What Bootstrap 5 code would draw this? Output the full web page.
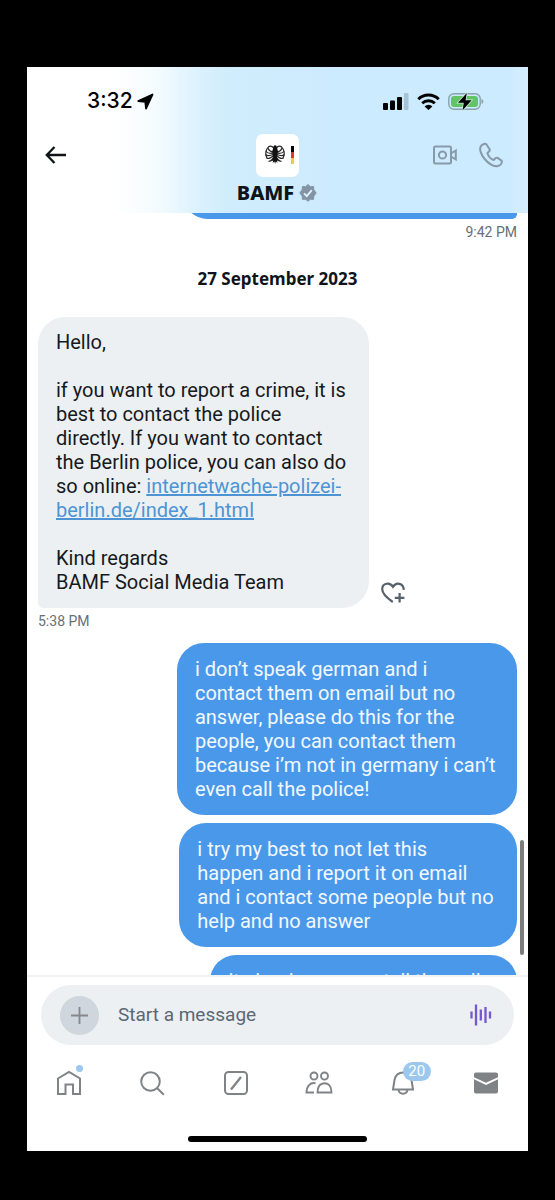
<!DOCTYPE html>
<html lang="en">
<head>
<meta charset="utf-8">
<meta name="viewport" content="width=device-width, initial-scale=1">
<title>BAMF – Messages</title>
<link href="https://cdn.jsdelivr.net/npm/bootstrap@5.3.0/dist/css/bootstrap.min.css" rel="stylesheet">
<style>
  body { background: #000; font-family: Roboto, "Liberation Sans", sans-serif; color: #16191d; font-size: 20px; line-height: 24px; }
  .screen { margin: 67px 27px 49px; height: calc(100vh - 116px); background: #fff; }
  .top-area { height: 146px; background: linear-gradient(90deg, #fff 17%, #f4fbff 26%, #dcf2fc 34%, #cfedfb 40%, #cdebfe 60%, #cdebfe 96%, #d5eefe 100%); }
  .status { height: 34px; margin-top: 17px; padding: 0 44px 0 60px; }
  .clock { font-family: Inter, sans-serif; font-weight: 500; font-size: 21px; color: #000; }
  .chat-head { display: grid; grid-template-columns: 1fr auto 1fr; padding: 0 17px; }
  .head-tools { height: 42px; }
  .calls { gap: 22px; padding-right: 8px; }
  .plain { border: 0; background: none; padding: 0; line-height: 0; color: inherit; }
  .avatar { width: 43px; height: 43px; border-radius: 7px; }
  .peer { font-family: "Noto Sans", sans-serif; font-weight: 800; font-size: 20px; color: #0f1419; }
  .steel { color: #8899a8; }
  .thread { padding: 0 11px; }
  .bubble { border-radius: 27px; padding: 14px 18px; }
  .mine { background: #4a98ea; color: #f2f9ff; align-self: flex-end; width: 71%; }
  .theirs { background: #ecf0f2; border-bottom-left-radius: 5px; width: 69%; padding: 13px 18px 14px; }
  .earlier { height: 52px; width: 70%; margin-top: -46px; border-bottom-right-radius: 5px; }
  .reply { margin-top: 13px; }
  .follow-up { width: 70.5%; }
  .latest { width: 64%; }
  .theirs a { color: #4d94d5; }
  .stamp { font-size: 14px; line-height: 18px; color: #66707a; }
  .day { font-family: "Noto Sans", sans-serif; font-weight: 700; font-size: 17px; line-height: 20px; margin: 28px 0; color: #0f1419; }
  .thumb { right: 4px; bottom: 20px; width: 4px; height: 115px; background: #7d7d7d; }
  .composer { border-top: 2px solid #f0f2f3; padding: 8px 14px 0; }
  .pill { height: 60px; background: #ecf0f2; padding: 0 21px 0 19px; }
  .add { width: 39px; height: 39px; background: #cfd6dd; }
  .pill input { border: 0; background: none; outline: 0; min-width: 0; font-size: 19px; color: #536471; padding: 0; margin-left: 19px; }
  .pill input::placeholder { color: #5b6772; opacity: 1; }
  .tabs { height: 76px; color: #808386; }
  .tabs a { color: inherit; line-height: 0; }
  .dot { width: 7px; height: 7px; background: #9cc8ee; top: -5px; right: -1px; }
  .count { left: 13px; top: -8px; height: 19px; width: 28px; background: #9cc8ee; color: #fff; font-size: 15px; line-height: 19px; }
  .home-bar { width: 179px; height: 6px; background: #000; margin: 15px auto 9px; }
</style>
</head>
<body>
<main class="screen d-flex flex-column overflow-hidden">
  <header class="top-area flex-shrink-0 overflow-hidden">
    <div class="status d-flex align-items-center justify-content-between">
      <div class="d-flex align-items-center gap-1">
        <span class="clock">3:32</span>
        <svg width="17" height="17" viewBox="0 0 17 17"><path d="M15.500 1.500 9 15.500 8.300 8.800 1.300 8Z" stroke="#000" stroke-width="1.800" stroke-linejoin="round"/></svg>
      </div>
      <div class="d-flex align-items-center gap-2">
        <svg width="26" height="17" viewBox="0 0 26 17"><rect y="10" width="5" height="7" rx="1"/><rect x="7" y="7.500" width="5" height="9.500" rx="1"/><rect x="14" y="4" width="5" height="13" rx="1"/><rect x="21" y="0" width="4.500" height="17" rx="1" fill="#a8c2d3"/></svg>
        <svg width="23" height="17" viewBox="0 0 23 17" fill="none" stroke="#000" stroke-width="3"><path d="M1.300 6.200a14.500 14.500 0 0 1 20.400 0M5.200 10.200a9 9 0 0 1 12.600 0"/><path d="M7.600 13.400a5.500 5.500 0 0 1 7.800 0L11.500 17Z" fill="#000" stroke="none"/></svg>
        <svg width="36" height="19" viewBox="0 0 36 19"><rect x=".8" y="1.800" width="31.400" height="15.400" rx="5" fill="none" stroke="#8ba3a8" stroke-width="1.400"/><rect x="3" y="4" width="27" height="11" rx="3" fill="#63c466"/><path d="M33.500 7v5c2.500-.8 2.500-4.200 0-5Z" fill="#8ba3a8"/><path d="M18.800 1 10 10.800h5.800L14.600 18.200l9-10h-6Z" fill="#000" stroke="#cdebe0" stroke-width="1.500" paint-order="stroke"/></svg>
      </div>
    </div>
    <div class="chat-head mt-3">
      <div class="head-tools d-flex align-items-center">
        <button class="plain" aria-label="Back"><svg width="24" height="20" viewBox="0 0 24 20" fill="none" stroke="#0f1419" stroke-width="2.300"><path d="M22 10H3M10.500 2 2.800 10l7.700 8"/></svg></button>
      </div>
      <div class="text-center">
        <svg class="avatar bg-white d-block mx-auto" viewBox="0 0 43 43" aria-label="BAMF">
          <g fill="none" stroke="#2a2a2a" stroke-width="1.200"><path d="M17.500 14c-1.500-2.500-4.500-2.500-6 0-2 3-2 7-.5 10M20.500 14c1.500-2.500 4.500-2.500 6 0 2 3 2 7 .5 10"/><path d="M18 18c-3 0-5-1-6-4M18 19c-4 1-7 0-8.300-2M18 20c-4 2-7 2-8.500.5M18 21c-3 3-6 4-7.500 3M18 22c-1 3-3 5-5.500 5.500M20 18c3 0 5-1 6-4M20 19c4 1 7 0 8.300-2M20 20c4 2 7 2 8.500.5M20 21c3 3 6 4 7.500 3M20 22c1 3 3 5 5.500 5.500"/></g>
          <path d="M17.300 13.500c0-3 3.400-3 3.700 0l1 4-1.200 6 2.700 4-2.500-1 .5 2.500-1.700-1.500-.7 2.500-.7-2.500-1.700 1.500.5-2.500-2.500 1 2.700-4-1.200-6Z" fill="#111"/>
          <path d="M35 12h3v6h-3z"/><path d="M35 18h3v6h-3z" fill="#d8382c"/><path d="M35 24h3v6h-3z" fill="#f3c94b"/>
        </svg>
        <div class="d-flex align-items-center gap-1 mt-1"><span class="peer">BAMF</span>
          <svg width="20" height="20" viewBox="0 0 20 20"><path d="m10 1.500 2.300 2.200 3.200-.2.300 3.200 2.400 3.300-2.400 3.100-.3 3.300-3.200-.2L10 18.300l-2.300-2.100-3.200.2-.3-3.300L1.800 10l2.400-3.300.3-3.200 3.200.2Z" fill="#8294a5" stroke="#8294a5" stroke-linejoin="round"/><path d="m6 10.300 2.800 2.800 5-6" fill="none" stroke="#e2f3ff" stroke-width="1.800"/></svg>
        </div>
      </div>
      <div class="head-tools calls d-flex align-items-center justify-content-end steel">
        <button class="plain" aria-label="Video call"><svg width="24" height="20" viewBox="0 0 24 20" fill="none" stroke="currentColor" stroke-width="2"><rect x="1" y="1.500" width="17" height="17" rx="1.500"/><circle cx="9.500" cy="10" r="3.600"/><path d="m18 8.500 4.800-3v9l-4.800-3"/></svg></button>
        <button class="plain" aria-label="Call"><svg width="24" height="26" viewBox="0 0 24 26" fill="none" stroke="currentColor" stroke-width="2" stroke-linejoin="round"><path d="M6.300 1.800c-1-.4-3.800 1.200-4.700 3C.5 7 1.500 12 5.700 17c4.400 5.200 9.800 7.700 13.200 7 2.300-.5 3.900-2.800 4-4.200 0-.6-.2-1-.7-1.400l-3.600-2.500c-.7-.4-1.300-.3-1.900.2l-2.100 1.900c-3-1.200-5.300-4-6.200-6.800l2-2.200c.4-.5.5-1.100.2-1.800L7.700 2.800c-.3-.6-.7-.9-1.400-1Z"/></svg></button>
      </div>
    </div>
  </header>

  <section class="position-relative overflow-hidden flex-grow-1" style="min-height:0">
    <div class="thread d-flex flex-column">
      <div class="bubble mine earlier flex-shrink-0"></div>
      <div class="stamp text-end mt-1">9:42 PM</div>
      <h1 class="day text-center">27 September 2023</h1>
      <div class="d-flex align-items-end">
        <div class="bubble theirs">Hello,<br><br>if you want to report a crime, it is<br>best to contact the police<br>directly. If you want to contact<br>the Berlin police, you can also do<br>so online: <a href="#">internetwache-polizei-<br>berlin.de/index_1.html</a><br><br>Kind regards<br>BAMF Social Media Team</div>
        <button class="plain ms-2 p-1" aria-label="Add reaction"><svg width="25" height="22" viewBox="0 0 25 22" fill="none" stroke="#56616b" stroke-width="2.200"><path d="M11.800 20C4.500 15 1 10.800 1.200 6.800 1.500 1.200 8.800-.3 12 4.800c3.200-5 10.300-3.800 10.800 3"/><path d="M18.600 11v9.600M13.800 15.800h9.600"/></svg></button>
      </div>
      <div class="stamp mt-1">5:38 PM</div>
      <div class="bubble mine reply mb-2">i don’t speak german and i<br>contact them on email but no<br>answer, please do this for the<br>people, you can contact them<br>because i’m not in germany i can’t<br>even call the police!</div>
      <div class="bubble mine follow-up mb-2">i try my best to not let this<br>happen and i report it on email<br>and i contact some people but no<br>help and no answer</div>
      <div class="bubble mine latest text-nowrap">it simple you can tell the police</div>
    </div>
    <div class="thumb position-absolute rounded-pill"></div>
  </section>

  <footer class="flex-shrink-0">
    <div class="composer">
      <div class="pill rounded-pill d-flex align-items-center">
        <button class="plain add rounded-circle flex-shrink-0" aria-label="Add attachment"><svg width="17" height="17" viewBox="0 0 17 17" stroke="#85878d" stroke-width="1.800"><path d="M8.500 0v17M0 8.500h17"/></svg></button>
        <input class="flex-grow-1" type="text" placeholder="Start a message" aria-label="Start a message">
        <button class="plain" aria-label="Voice message"><svg width="24" height="24" viewBox="0 0 24 24" stroke="#7657cf" stroke-width="2.300"><path d="M2.500 8.500v7M7 1.500v21M11.800 6.500v11M16.500 4v16M21 8.500v7"/></svg></button>
      </div>
    </div>
    <nav class="tabs row g-0 align-items-center text-center">
      <div class="col"><a href="#" class="position-relative d-inline-block" aria-label="Home"><svg width="26" height="26" viewBox="0 0 26 26" fill="none" stroke="currentColor" stroke-width="2"><path d="M2 8.500 13 2l11 6.500V24h-7V14.500H9.500V24H2Z"/></svg><span class="dot position-absolute rounded-circle"></span></a></div>
      <div class="col"><a href="#" aria-label="Search"><svg width="26" height="26" viewBox="0 0 26 26" fill="none" stroke="currentColor" stroke-width="2"><circle cx="11.500" cy="11.500" r="9.300"/><path d="m18 18 6.800 6.800"/></svg></a></div>
      <div class="col"><a href="#" aria-label="Grok"><svg width="26" height="26" viewBox="0 0 26 26" fill="none" stroke="currentColor" stroke-width="2"><rect x="2" y="2" width="22" height="22" rx="3.500"/><path d="M18 7 8 19.500" stroke-width="2.300"/></svg></a></div>
      <div class="col"><a href="#" aria-label="Communities"><svg width="28" height="26" viewBox="0 0 28 26" fill="none" stroke="currentColor" stroke-width="1.900"><circle cx="9" cy="6" r="3.500"/><circle cx="19.500" cy="6" r="3.500"/><path d="M10.500 13.200C5 12.200 1.700 16 1.500 22.500h7.500M12.500 22.500c.1-5.500 2.500-9.300 7-9.300s7 3.800 7 9.300Z"/></svg></a></div>
      <div class="col"><a href="#" class="position-relative d-inline-block" aria-label="Notifications"><svg width="26" height="26" viewBox="0 0 26 26" fill="none" stroke="currentColor" stroke-width="2"><path d="M3 19.500 4.500 10c1-10 16-10 17 0L23 19.500Z"/><path d="M8.500 19.500c.5 5.500 8.500 5.500 9 0"/></svg><span class="count position-absolute rounded-pill">20</span></a></div>
      <div class="col"><a href="#" aria-label="Messages"><svg width="26" height="26" viewBox="0 0 26 26" fill="currentColor"><path d="M1 4.500C1 3.300 1.800 2.500 3 2.500h20c1.200 0 2 .8 2 2v2.700l-12 5.600L1 7.200Z"/><path d="m1 9.300 12 5.800 12-5.800V21.500c0 1.200-.8 2-2 2H3c-1.200 0-2-.8-2-2Z"/></svg></a></div>
    </nav>
    <div class="home-bar rounded-pill"></div>
  </footer>
</main>
<script src="https://cdn.jsdelivr.net/npm/bootstrap@5.3.0/dist/js/bootstrap.bundle.min.js"></script>
</body>
</html>
